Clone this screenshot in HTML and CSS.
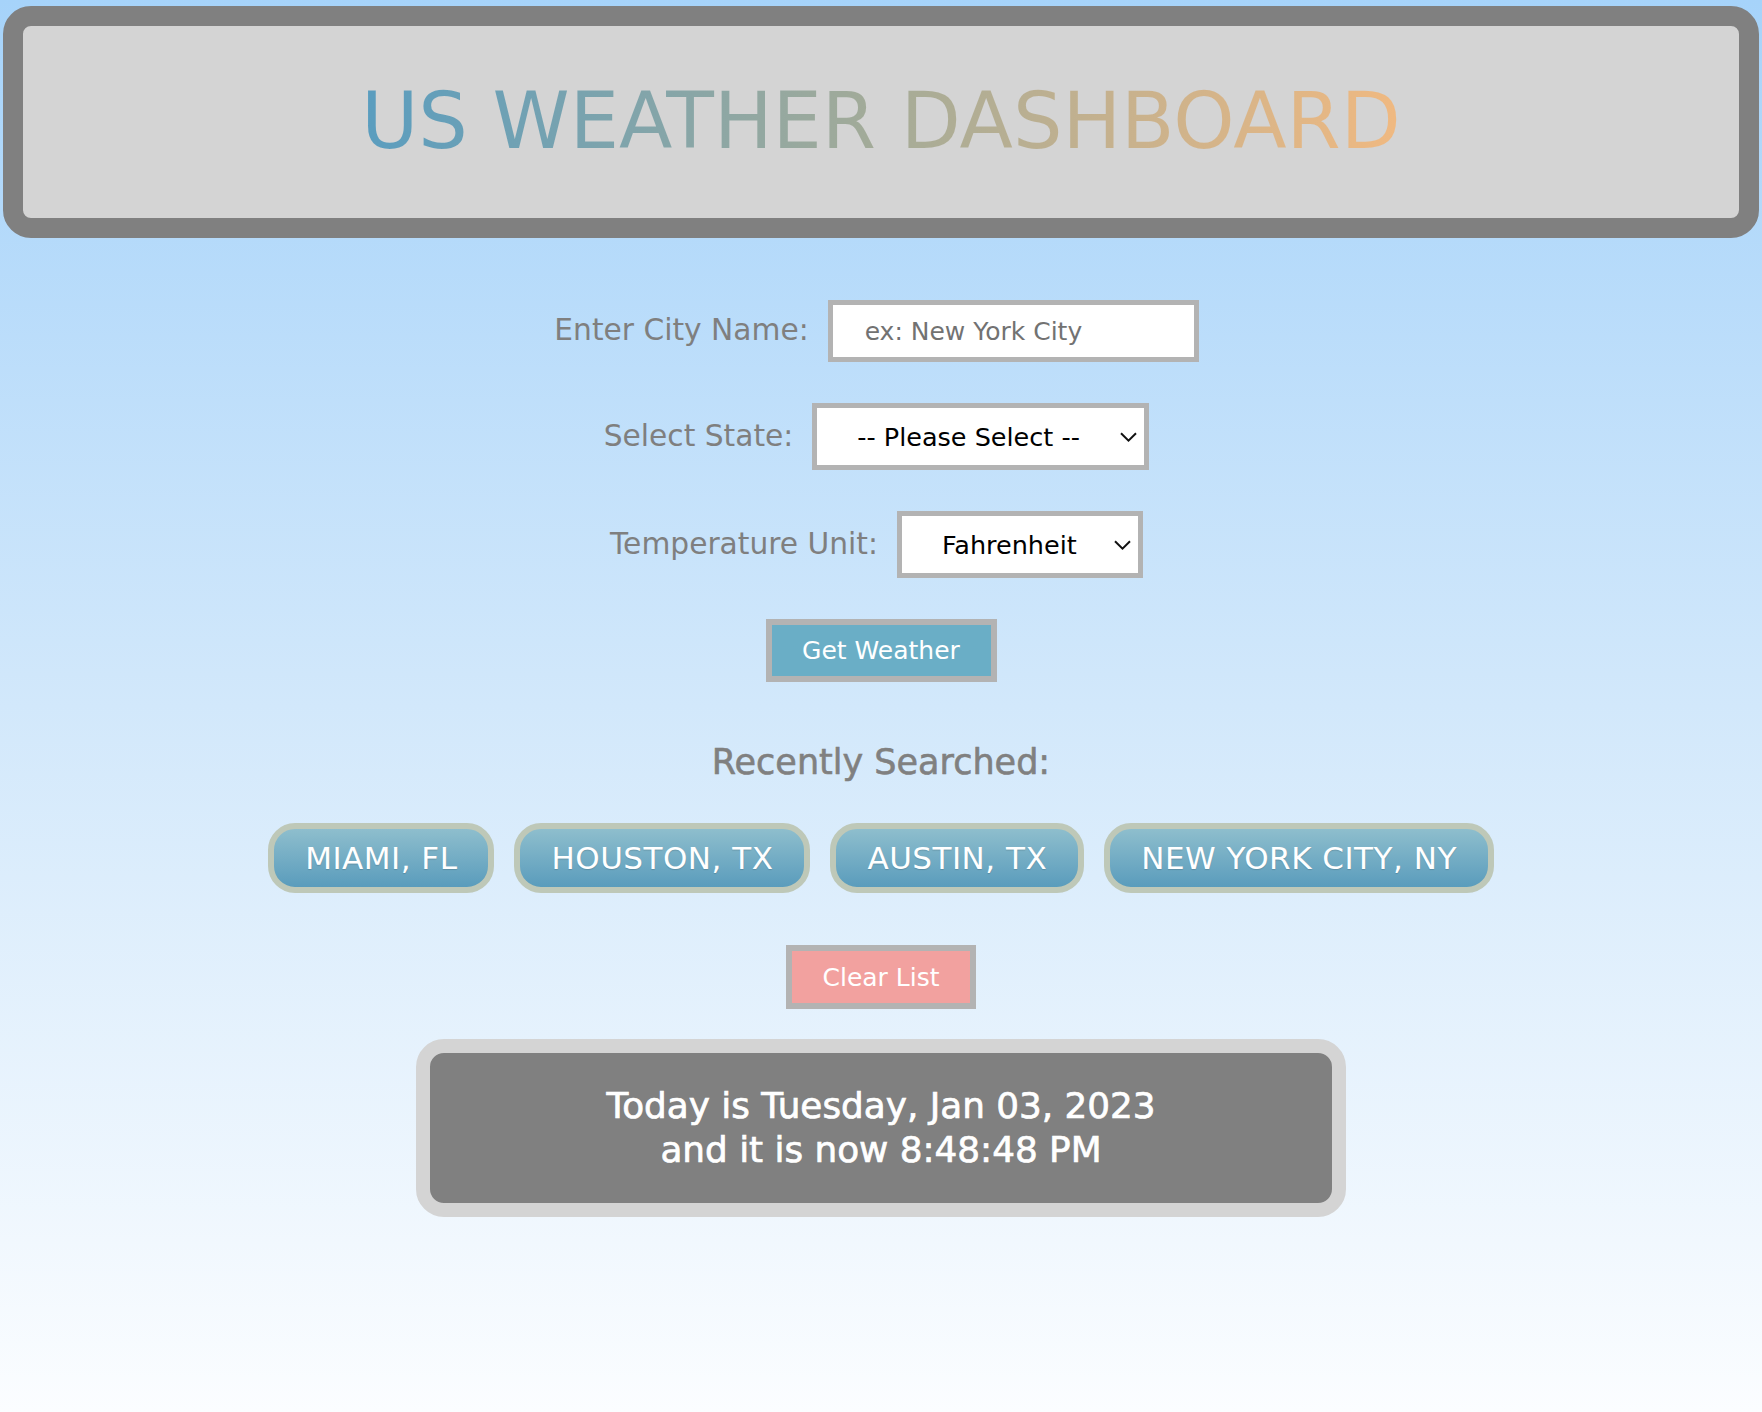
FILE: index.html
```html
<!DOCTYPE html>
<html lang="en">
<head>
<meta charset="utf-8">
<title>US Weather Dashboard</title>
<link rel="stylesheet" href="styles.css">
</head>
<body>
<header class="banner">
  <h1 class="title"><span class="title-text">US WEATHER DASHBOARD</span></h1>
</header>

<main class="main">
  <form class="search-form">
    <div class="row">
      <label class="label" for="city">Enter City Name:</label>
      <input class="text-input" id="city" type="text" placeholder="ex: New York City">
    </div>
    <div class="row">
      <label class="label" for="state">Select State:</label>
      <span class="select-wrap">
        <select class="select select-state" id="state">
          <option>-- Please Select --</option>
          <option>AL</option><option>AK</option><option>AZ</option><option>AR</option>
          <option>CA</option><option>CO</option><option>CT</option><option>DE</option>
          <option>FL</option><option>GA</option><option>NY</option><option>TX</option>
        </select>
        <svg class="chevron" width="17" height="10" viewBox="0 0 17 10"><path d="M1 1.2 L8.5 8.6 L16 1.2" fill="none" stroke="#111" stroke-width="2"/></svg>
      </span>
    </div>
    <div class="row">
      <label class="label" for="unit">Temperature Unit:</label>
      <span class="select-wrap">
        <select class="select select-unit" id="unit">
          <option>Fahrenheit</option>
          <option>Celsius</option>
        </select>
        <svg class="chevron" width="17" height="10" viewBox="0 0 17 10"><path d="M1 1.2 L8.5 8.6 L16 1.2" fill="none" stroke="#111" stroke-width="2"/></svg>
      </span>
    </div>
    <div class="row-plain">
      <button class="btn-get" type="button">Get Weather</button>
    </div>
  </form>

  <h2 class="recent-title">Recently Searched:</h2>
  <div class="recent-list">
    <button class="city-btn" type="button">MIAMI, FL</button>
    <button class="city-btn" type="button">HOUSTON, TX</button>
    <button class="city-btn" type="button">AUSTIN, TX</button>
    <button class="city-btn" type="button">NEW YORK CITY, NY</button>
  </div>
  <div class="row-plain">
    <button class="btn-clear" type="button">Clear List</button>
  </div>

  <div class="datebox">
    <p class="date-line">Today is Tuesday, Jan 03, 2023</p>
    <p class="date-line">and it is now 8:48:48 PM</p>
  </div>
</main>
</body>
</html>
```

FILE: styles.css
```css
html {
  min-height: 100%;
  background: linear-gradient(to bottom, #a6d3fa 0%, #d2e8fb 50%, #fbfdff 100%);
}

body {
  margin: 0;
  min-height: 1412px;
  font-family: "DejaVu Sans", "Verdana", sans-serif;
  color: #808080;
}

.banner {
  margin: 6px 3px 0;
  height: 232px;
  box-sizing: border-box;
  border: 20px solid #808080;
  border-radius: 28px;
  background: #d4d4d4;
  display: flex;
  align-items: center;
  justify-content: center;
}

.title {
  margin: 0;
  font-size: 78px;
  font-weight: normal;
  line-height: 1.164;
  padding-bottom: 2px;
}

.title-text {
  display: inline-block;
  background: linear-gradient(to right, #5a9dbf 0%, #a4ab98 50%, #f0b981 100%);
  -webkit-background-clip: text;
  background-clip: text;
  color: transparent;
}

.main {
  display: flex;
  flex-direction: column;
  align-items: center;
}

.search-form {
  margin-top: 62px;
  display: flex;
  flex-direction: column;
  align-items: center;
  gap: 41px;
  width: 100%;
}

.row {
  display: flex;
  align-items: center;
  justify-content: center;
  gap: 19px;
  padding-right: 9px;
}

.row-plain {
  display: flex;
  justify-content: center;
}

.label {
  font-size: 29.7px;
  color: #7f7f7f;
  margin-top: -3px;
}

.text-input {
  box-sizing: border-box;
  width: 371px;
  height: 62px;
  border: 5px solid #b3b3b3;
  border-radius: 0;
  padding: 0 0 0 32px;
  font-family: inherit;
  font-size: 25px;
  color: #333;
  background: #fff;
  outline: none;
}

.text-input::placeholder {
  color: #727272;
}

.select-wrap {
  position: relative;
  display: inline-block;
}

.select {
  display: block;
  box-sizing: border-box;
  height: 67px;
  border: 5px solid #b3b3b3;
  border-radius: 0;
  padding: 0 0 0 40px;
  font-family: inherit;
  font-size: 25.5px;
  color: #000;
  background: #fff;
  -webkit-appearance: none;
  appearance: none;
  outline: none;
}

.select-state {
  width: 337px;
}

.select-unit {
  width: 246px;
}

.chevron {
  position: absolute;
  right: 12px;
  top: 50%;
  transform: translateY(-50%);
  pointer-events: none;
}

.btn-get {
  box-sizing: border-box;
  width: 231px;
  height: 63px;
  border: 6px solid #b3b3b3;
  background: #6aaec6;
  color: #fff;
  font-family: inherit;
  font-size: 25px;
  padding: 0;
}

.recent-title {
  margin: 60px 0 0;
  font-size: 35px;
  line-height: 40px;
  font-weight: normal;
  color: #808080;
  -webkit-text-stroke: 0.6px #808080;
}

.recent-list {
  margin-top: 41px;
  display: flex;
  justify-content: center;
  gap: 20px;
}

.city-btn {
  box-sizing: border-box;
  height: 70px;
  padding: 0 31px;
  border: 6px solid #bec8b8;
  border-radius: 27px;
  background: linear-gradient(to bottom, #8ebecd 0%, #5a9cbc 100%);
  color: #fff;
  font-family: inherit;
  font-size: 31px;
  letter-spacing: 0.5px;
  text-shadow: 0 1px 1px rgba(0, 0, 0, 0.15);
}

.btn-clear {
  margin-top: 52px;
  box-sizing: border-box;
  width: 190px;
  height: 64px;
  border: 6px solid #b3b3b3;
  background: #f2a19f;
  color: #fff;
  font-family: inherit;
  font-size: 25px;
  padding: 0;
}

.datebox {
  margin-top: 30px;
  box-sizing: border-box;
  width: 930px;
  height: 178px;
  border: 14px solid #d4d4d4;
  border-radius: 28px;
  background: #808080;
  display: flex;
  flex-direction: column;
  justify-content: center;
  align-items: center;
}

.date-line {
  margin: 0;
  font-size: 35.8px;
  line-height: 44px;
  color: #fff;
  -webkit-text-stroke: 0.7px #fff;
}
```
